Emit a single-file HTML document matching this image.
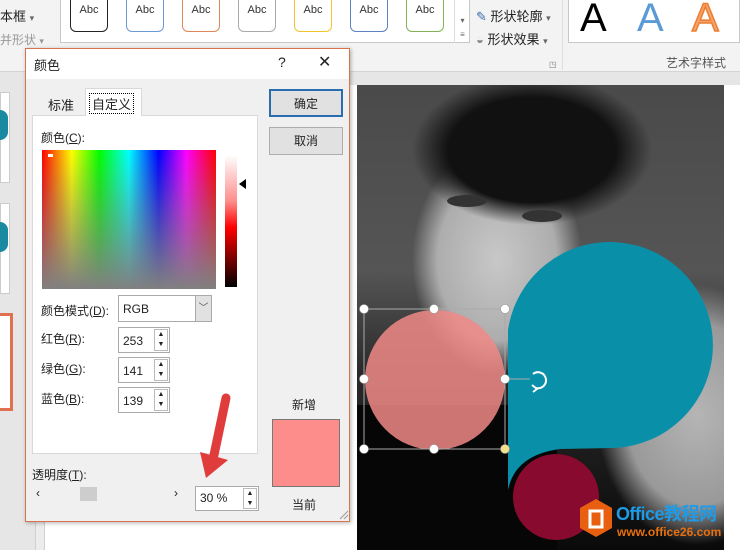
<!DOCTYPE html>
<html><head><meta charset="utf-8"><style>
*{margin:0;padding:0;box-sizing:border-box}
html,body{width:740px;height:550px;overflow:hidden}
body{position:relative;background:#e6e6e6;font-family:"Liberation Sans","Noto Sans CJK SC",sans-serif;font-size:12px;color:#222}
.a{position:absolute}
.abc{position:absolute;top:-6px;width:38px;height:38px;border:1px solid;border-radius:6px;background:#fff;font-size:11px;text-align:center;padding-top:9px;color:#333}
.btn{position:absolute;left:269px;width:74px;height:28px;background:#e1e1e1;border:1px solid #adadad;text-align:center;line-height:26px;font-size:12px}
.inp{position:absolute;background:#fff;border:1px solid #aaa;font-size:12px;padding:6px 0 0 4px}
.spin{position:absolute;width:14px;background:#fff;border:1px solid #bbb}
</style></head><body>
<div class="a" style="left:0;top:0;width:740px;height:72px;background:#f3f3f3;border-bottom:1px solid #d4d4d4"></div>
<div class="a" style="left:0;top:6px;font-size:13px">本框 <span style="font-size:9px;color:#666">▾</span></div>
<div class="a" style="left:0;top:31px;color:#999;font-size:12px">并形状 <span style="font-size:9px">▾</span></div>
<div class="a" style="left:60px;top:-2px;width:410px;height:45px;background:#fff;border:1px solid #c8c8c8"></div>
<div class="abc" style="left:70px;border-color:#222">Abc</div>
<div class="abc" style="left:126px;border-color:#6a9ad6">Abc</div>
<div class="abc" style="left:182px;border-color:#e0875a">Abc</div>
<div class="abc" style="left:238px;border-color:#aaa">Abc</div>
<div class="abc" style="left:294px;border-color:#f2c530">Abc</div>
<div class="abc" style="left:350px;border-color:#5a82c4">Abc</div>
<div class="abc" style="left:406px;border-color:#82b356">Abc</div>
<div class="a" style="left:454px;top:0;width:16px;height:43px;border-left:1px solid #ddd;font-size:8px;color:#666;text-align:center;line-height:14px"><br>▾<br>≡</div>
<div class="a" style="left:476px;top:6px;font-size:13px"><span style="color:#3b6fb0">✎</span> 形状轮廓 <span style="font-size:9px;color:#666">▾</span></div>
<div class="a" style="left:476px;top:29px;font-size:13px"><span style="color:#888">◒</span> 形状效果 <span style="font-size:9px;color:#666">▾</span></div>
<div class="a" style="left:549px;top:60px;font-size:8px;color:#777">◳</div>
<div class="a" style="left:562px;top:0;width:1px;height:70px;background:#ddd"></div>
<div class="a" style="left:568px;top:-2px;width:172px;height:45px;background:#fff;border:1px solid #c8c8c8"></div>
<div class="a" style="left:580px;top:-4px;font-size:40px;color:#000">A</div>
<div class="a" style="left:637px;top:-4px;font-size:40px;color:#5b9bd5">A</div>
<div class="a" style="left:692px;top:-4px;font-size:40px;color:#f4a46c;-webkit-text-stroke:1.5px #ed7d31">A</div>
<div class="a" style="left:666px;top:54px;font-size:12px;color:#555">艺术字样式</div>
<div class="a" style="left:0;top:92px;width:10px;height:91px;background:#fff;border:1px solid #ccc"></div>
<div class="a" style="left:0;top:110px;width:8px;height:30px;background:#1a8aa0;border-radius:0 15px 15px 0"></div>
<div class="a" style="left:0;top:203px;width:10px;height:91px;background:#fff;border:1px solid #ccc"></div>
<div class="a" style="left:0;top:222px;width:8px;height:30px;background:#1a8aa0;border-radius:0 15px 15px 0"></div>
<div class="a" style="left:0;top:313px;width:13px;height:98px;background:#fff;border:3px solid #e07050;border-left:none"></div>
<div class="a" style="left:35px;top:85px;width:10px;height:465px;background:#ececec;border-left:1px solid #d0d0d0;border-right:1px solid #d0d0d0"></div>
<div class="a" style="left:45px;top:85px;width:312px;height:465px;background:#fff"></div>
<div class="a" style="left:724px;top:85px;width:16px;height:465px;background:#fff"></div>
<div class="a" style="left:357px;top:85px;width:367px;height:465px;overflow:hidden;background:linear-gradient(180deg,#4a4a4a 0%,#555 40%,#2a2a2a 62%,#0a0a0a 100%)">
  <div class="a" style="left:240px;top:200px;width:200px;height:260px;border-radius:50%;background:radial-gradient(closest-side,#b5b5b5,#999 70%,rgba(120,120,120,0))"></div>
  <div class="a" style="left:55px;top:60px;width:170px;height:230px;border-radius:45%;background:radial-gradient(closest-side,#c8c8c8,#adadad 70%,rgba(150,150,150,0))"></div>
  <div class="a" style="left:55px;top:-10px;width:240px;height:150px;border-radius:50% 50% 40% 40%;background:radial-gradient(closest-side,#111 70%,rgba(20,20,20,0))"></div>
  <div class="a" style="left:90px;top:110px;width:40px;height:12px;border-radius:50%;background:#333"></div>
  <div class="a" style="left:165px;top:125px;width:40px;height:12px;border-radius:50%;background:#333"></div>
  <div class="a" style="left:0;top:320px;width:200px;height:145px;background:#060606"></div>
</div>
<svg class="a" style="left:0;top:0" width="740" height="550">
<circle cx="435" cy="380" r="70" fill="#f08a87" opacity="0.85"/>
<path d="M508,490 L508,330 A103,103 0 1 1 612,448 L560,449 Q515,455 508,490Z" fill="#0a8fa8"/>
<circle cx="556" cy="497" r="43" fill="#880a2e"/>
<rect x="364" y="309" width="141" height="140" fill="none" stroke="#aaa"/>
<line x1="505" y1="379" x2="530" y2="379" stroke="#aaa"/>
<g fill="#fff" stroke="#999" stroke-width="0.6">
<circle cx="364" cy="309" r="4.5"/><circle cx="434" cy="309" r="4.5"/><circle cx="505" cy="309" r="4.5"/>
<circle cx="364" cy="379" r="4.5"/><circle cx="505" cy="379" r="4.5"/>
<circle cx="364" cy="449" r="4.5"/><circle cx="434" cy="449" r="4.5"/><circle cx="505" cy="449" r="4.5" fill="#f3e08a"/></g>
<path d="M533,374 A8,8 0 1 1 536,388" fill="none" stroke="#fff" stroke-width="2"/>
<path d="M532,385 l5,4 l-4,3" fill="none" stroke="#fff" stroke-width="1.8"/>
<polygon points="580,508 596,499 612,508 612,528 596,537 580,528" fill="#e8600f"/>
<rect x="590" y="511" width="12" height="16" fill="none" stroke="#fff" stroke-width="3"/>
</svg>
<div class="a" style="left:616px;top:503px;font-size:18px;line-height:22px;font-weight:bold;color:#1e9be6;letter-spacing:-0.5px">Office教程网</div>
<div class="a" style="left:617px;top:525px;font-size:12px;line-height:14px;font-weight:bold;color:#e8700f">www.office26.com</div>
<div class="a" style="left:25px;top:48px;width:325px;height:474px;background:#f0f0f0;border:1px solid #d87350;box-shadow:1px 1px 4px rgba(0,0,0,.3)"></div>
<div class="a" style="left:26px;top:49px;width:323px;height:30px;background:#fff"></div>
<div class="a" style="left:34px;top:55px;font-size:13px">颜色</div>
<div class="a" style="left:278px;top:54px;font-size:14px">?</div>
<div class="a" style="left:318px;top:52px;font-size:16px;font-weight:300">✕</div>
<div class="a" style="left:32px;top:115px;width:226px;height:339px;background:#fff;border:1px solid #d9d9d9"></div>
<div class="a" style="left:35px;top:90px;width:50px;height:26px;font-size:13px;padding:5px 0 0 13px">标准</div>
<div class="a" style="left:85px;top:88px;width:57px;height:28px;background:#fff;border:1px solid #d9d9d9;border-bottom:none"></div>
<div class="a" style="left:89px;top:93px;font-size:13px;border:1px dotted #000;padding:0 2px">自定义</div>
<div class="btn" style="top:89px;border:2px solid #2a6cb0">确定</div>
<div class="btn" style="top:127px">取消</div>
<div class="a" style="left:41px;top:129px">颜色(<u>C</u>):</div>
<div class="a" style="left:42px;top:150px;width:174px;height:139px;background:linear-gradient(180deg,rgba(128,128,128,0) 0%,#808080 100%),linear-gradient(90deg,#f00,#ff0 17%,#0f0 33%,#0ff 50%,#00f 67%,#f0f 83%,#f00)"></div>
<div class="a" style="left:48px;top:154px;width:5px;height:3px;background:#fff"></div>
<div class="a" style="left:225px;top:155px;width:12px;height:132px;background:linear-gradient(180deg,#fff 0%,#fd8d8b 35%,#f00 55%,#000 100%)"></div>
<div class="a" style="left:239px;top:179px;width:0;height:0;border-top:5px solid transparent;border-bottom:5px solid transparent;border-right:7px solid #000"></div>
<div class="a" style="left:41px;top:302px">颜色模式(<u>D</u>):</div>
<div class="inp" style="left:118px;top:295px;width:94px;height:27px">RGB</div>
<div class="a" style="left:195px;top:296px;width:16px;height:25px;background:#e1e1e1;border-left:1px solid #aaa;font-size:10px;text-align:center;line-height:25px;color:#555">﹀</div>
<div class="a" style="left:41px;top:330px">红色(<u>R</u>):</div>
<div class="a" style="left:41px;top:360px">绿色(<u>G</u>):</div>
<div class="a" style="left:41px;top:390px">蓝色(<u>B</u>):</div>
<div class="inp" style="left:118px;top:327px;width:52px;height:26px">253</div>
<div class="inp" style="left:118px;top:357px;width:52px;height:26px">141</div>
<div class="inp" style="left:118px;top:387px;width:52px;height:26px">139</div>
<div class="spin" style="left:154px;top:329px;height:22px;font-size:7px;text-align:center;line-height:10px">▲<br>▼</div>
<div class="spin" style="left:154px;top:359px;height:22px;font-size:7px;text-align:center;line-height:10px">▲<br>▼</div>
<div class="spin" style="left:154px;top:389px;height:22px;font-size:7px;text-align:center;line-height:10px">▲<br>▼</div>
<div class="a" style="left:292px;top:396px">新增</div>
<div class="a" style="left:272px;top:419px;width:68px;height:68px;background:#fd8d8b;border:1px solid #777"></div>
<div class="a" style="left:292px;top:496px">当前</div>
<div class="a" style="left:32px;top:466px">透明度(<u>T</u>):</div>
<div class="a" style="left:36px;top:486px;font-size:12px">‹</div>
<div class="a" style="left:80px;top:487px;width:17px;height:14px;background:#cdcdcd"></div>
<div class="a" style="left:174px;top:486px;font-size:12px">›</div>
<div class="inp" style="left:195px;top:486px;width:64px;height:25px;padding-top:4px">30 %</div>
<div class="spin" style="left:243px;top:488px;height:21px;font-size:7px;text-align:center;line-height:10px">▲<br>▼</div>
<svg class="a" style="left:0;top:0" width="360" height="530">
<path d="M226,398 L214,455" stroke="#e03c3c" stroke-width="9" stroke-linecap="round"/>
<polygon points="200,452 228,460 206,478" fill="#e03c3c"/>
<path d="M340,519 l8,-8 M344,519 l4,-4" stroke="#999"/>
</svg>
</body></html>
